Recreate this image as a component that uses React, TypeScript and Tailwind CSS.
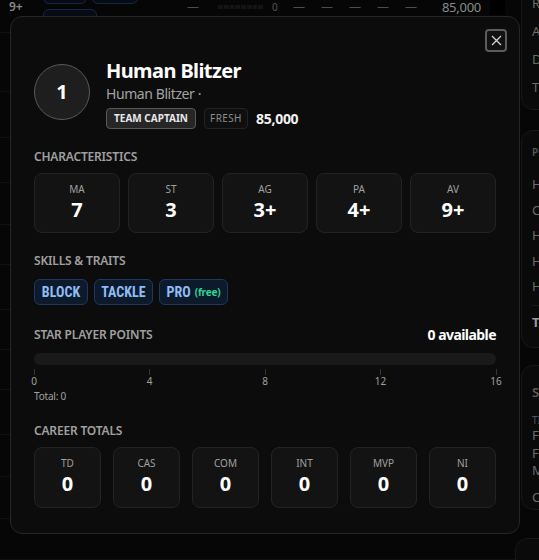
import React from 'react';

const stats = [
  { label: 'MA', value: '7' },
  { label: 'ST', value: '3' },
  { label: 'AG', value: '3+' },
  { label: 'PA', value: '4+' },
  { label: 'AV', value: '9+' },
];

const career = ['TD', 'CAS', 'COM', 'INT', 'MVP', 'NI'];

const sppTicks = [0, 4, 8, 12, 16];

// heights of the table rows behind the dialog
const rowHeights = [59, 46, 45, 42, 40, 45, 40, 40, 45, 42, 42, 41];

function SectionTitle({ children }: { children: React.ReactNode }) {
  return (
    <h3 className="text-xs font-semibold uppercase leading-4 tracking-[-0.015em] text-[#a0a0a0]">
      {children}
    </h3>
  );
}

function StatBox({ label, value, height }: { label: string; value: string; height: string }) {
  return (
    <div className={`flex ${height} flex-col items-center rounded-lg border border-[#232323] bg-[#131313] pt-2`}>
      <span className="text-[10px] leading-[14px] text-[#a0a0a0]">{label}</span>
      <span className="text-xl font-bold leading-7 text-white">{value}</span>
    </div>
  );
}

function SkillPill({ name, width, free }: { name: string; width: string; free?: boolean }) {
  return (
    <span
      className={`flex h-[26px] ${width} items-center justify-center gap-1 rounded-md border border-[#1d3960] bg-[#0c1a2c] font-bold text-[#8fbcf5]`}
    >
      <span className="font-['Liberation_Sans_Narrow','Roboto_Condensed',Roboto,sans-serif] text-[14px]">
        {name}
      </span>
      {free && <span className="text-[10px] font-bold tracking-[-0.02em] text-[#2fd393]">(free)</span>}
    </span>
  );
}

function PageBehind() {
  return (
    <div className="flex h-full">
      <div className="w-[517px] shrink-0">
        <div className="flex h-[33px] items-start border-b border-[#111111] text-[12px] leading-[12px]">
          <div className="w-[43px] pl-[9px] pt-px font-semibold text-[#8a8a8a]">9+</div>
          <div className="-mt-[18px] flex w-[140px] flex-wrap gap-x-[5px] gap-y-[5px]">
            <span className="h-[22px] w-[44px] rounded-md border border-[#132847] bg-[#070c14]" />
            <span className="h-[22px] w-[46px] rounded-md border border-[#132847] bg-[#070c14]" />
            <span className="h-[22px] w-[54px] rounded-md border border-[#132847] bg-[#070c14] px-2 pt-[4px] text-[10px] font-bold leading-[12px] text-[#1e3555]">
              PASS
            </span>
          </div>
          <div className="w-[31px] pl-[4px] pt-px text-[#4d4d4d]">—</div>
          <div className="flex w-[71px] items-center pl-[4px] pt-px">
            <div className="flex h-[4px] w-[45px] gap-px">
              {[0, 1, 2, 3, 4, 5, 6, 7].map((i) => (
                <span key={i} className="flex-1 bg-[#141414]" />
              ))}
            </div>
            <span className="ml-[9px] text-[10px] text-[#555555]">0</span>
          </div>
          {[0, 1, 2, 3, 4].map((i) => (
            <div key={i} className="w-[28px] pt-px text-center text-[#4d4d4d]">
              —
            </div>
          ))}
          <div className="w-[60px] pr-[4px] pt-px text-right text-[13px] leading-[13px] tracking-[-0.02em] text-[#8a8a8a]">
            85,000
          </div>
          <div className="ml-[5px] h-[15px] w-[15px] bg-black" />
        </div>
        {rowHeights.map((h, i) => (
          <div key={i} style={{ height: h }} className="border-b border-[#101010]" />
        ))}
      </div>

      <aside className="ml-[4px] w-[200px] shrink-0 text-[13px] text-[#6c6c6c]">
        <div className="-mt-[40px] h-[150px] rounded-xl border border-[#171717] bg-[#0a0a0a] pl-[10px] pt-[28px]">
          {['Rerolls', 'Apothecary', 'Dedicated Fans', 'Treasury'].map((t) => (
            <div key={t} className="leading-[28px]">
              {t}
            </div>
          ))}
        </div>
        <div className="mt-[20px] h-[218px] rounded-xl border border-[#171717] bg-[#0a0a0a] pl-[10px] pt-[14px]">
          <div className="text-[10px] font-semibold uppercase leading-[14px] text-[#555555]">Positions</div>
          <div className="mt-[13px]">
            {['Human Blitzer', 'Catcher', 'Human Thrower', 'Halfling', 'Human Lineman'].map((t, i) => (
              <div key={i} className="leading-[25.5px]">
                {t}
              </div>
            ))}
          </div>
          <div className="mt-[5px] border-t border-[#171717] pt-[6px] font-bold leading-5 text-[#9a9a9a]">Total</div>
        </div>
        <div className="mt-[17px] h-[145px] rounded-xl border border-[#171717] bg-[#0a0a0a] pl-[10px] pt-[19px]">
          <div className="font-semibold leading-[14px] text-[#5e5e5e]">Skills</div>
          <div className="mt-[14px] text-[10px] uppercase leading-[14px] text-[#555555]">Tiers</div>
          <div className="leading-[17.5px]">
            <div>Free</div>
            <div>Free</div>
            <div>Mixed</div>
          </div>
          <div className="mt-[8px] leading-[18px]">Cost</div>
        </div>
        <div className="-ml-[6px] mt-[28px] h-[60px] rounded-xl border border-[#171717] bg-[#0a0a0a]" />
      </aside>
    </div>
  );
}

export default function App() {
  return (
    <div className="relative h-[560px] w-[539px] overflow-hidden bg-[#060606] font-['Noto_Sans',sans-serif]">
      <PageBehind />

      {/* Player dialog */}
      <div className="absolute left-[10px] top-[16px] w-[510px] rounded-xl border border-[#262626] bg-[#0c0c0c] px-[23px] pb-[25px] pt-[41px]">
        <button className="absolute right-[12px] top-[12px] flex h-[23px] w-[22px] items-center justify-center rounded-[4px] border-2 border-[#5c5c5c] bg-[#111111]">
          <svg width="11" height="11" viewBox="0 0 11 11" fill="none" stroke="#d4d4d4" strokeWidth="1.3">
            <path d="M1 1l9 9M10 1l-9 9" />
          </svg>
        </button>

        {/* Header */}
        <div className="flex items-start gap-4">
          <div className="mt-[6px] flex h-14 w-14 shrink-0 items-center justify-center rounded-full border border-[#5a5a5a] bg-[#1e1e1e] text-xl font-bold text-white">
            1
          </div>
          <div>
            <h2 className="text-xl font-bold leading-[26px] tracking-[-0.03em] text-white">Human Blitzer</h2>
            <p className="text-sm leading-5 tracking-[-0.03em] text-[#a3a3a3]">Human Blitzer ·</p>
            <div className="mt-1 flex items-center gap-2">
              <span className="flex h-[21px] w-[90px] items-center justify-center rounded-[4px] border border-[#585858] bg-[#262626] text-[10px] font-bold text-[#e8e8e8]">
                TEAM CAPTAIN
              </span>
              <span className="flex h-[21px] w-[44px] items-center justify-center rounded-[4px] border border-[#232323] bg-[#0f0f0f] text-[10px] tracking-[0.04em] text-[#8c8c8c]">
                FRESH
              </span>
              <span className="text-sm font-bold tracking-[-0.02em] text-[#f2f2f2]">85,000</span>
            </div>
          </div>
        </div>

        {/* Characteristics */}
        <div className="mt-5">
          <SectionTitle>Characteristics</SectionTitle>
          <div className="mt-2 grid grid-cols-5 gap-2">
            {stats.map((s) => (
              <StatBox key={s.label} label={s.label} value={s.value} height="h-[60px]" />
            ))}
          </div>
        </div>

        {/* Skills */}
        <div className="mt-5">
          <SectionTitle>Skills &amp; Traits</SectionTitle>
          <div className="mt-[10px] flex gap-[6px]">
            <SkillPill name="BLOCK" width="w-[54px]" />
            <SkillPill name="TACKLE" width="w-[59px]" />
            <SkillPill name="PRO" width="w-[69px]" free />
          </div>
        </div>

        {/* Star player points */}
        <div className="mt-5">
          <div className="flex h-5 items-center justify-between">
            <SectionTitle>Star Player Points</SectionTitle>
            <span className="text-sm font-bold tracking-[-0.04em] text-white">0 available</span>
          </div>
          <div className="mt-2 h-3 rounded-full bg-[#1a1a1a]" />
          <div className="mt-1 flex justify-between">
            {sppTicks.map((t) => (
              <div key={t} className="flex w-0 flex-col items-center">
                <span className="h-[6px] w-px bg-[#353535]" />
                <span className="text-[10px] leading-3 text-[#a0a0a0]">{t}</span>
              </div>
            ))}
          </div>
          <p className="mt-[2px] text-[10px] leading-[14px] tracking-[-0.02em] text-[#a0a0a0]">Total: 0</p>
        </div>

        {/* Career */}
        <div className="mt-5">
          <SectionTitle>Career Totals</SectionTitle>
          <div className="mt-2 grid grid-cols-6 gap-3">
            {career.map((c) => (
              <StatBox key={c} label={c} value="0" height="h-[61px]" />
            ))}
          </div>
        </div>
      </div>
    </div>
  );
}
